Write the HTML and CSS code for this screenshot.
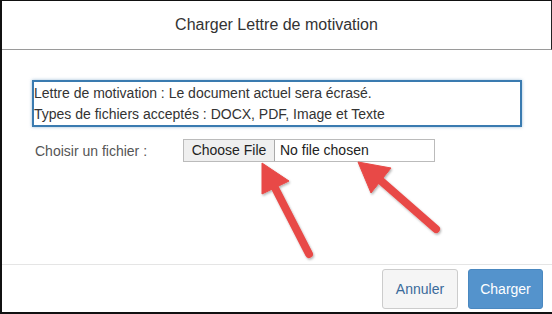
FILE: index.html
```html
<!DOCTYPE html>
<html lang="fr">
<head>
    <meta charset="UTF-8">
    <title>Charger Lettre de motivation</title>
    <link rel="stylesheet" href="styles.css">
</head>
<body>
<div class="modal">
    <div class="modal-header">Charger Lettre de motivation</div>
    <div class="modal-body">
        <div class="info">
            Lettre de motivation : Le document actuel sera écrasé.<br>
            Types de fichiers acceptés : DOCX, PDF, Image et Texte
        </div>
        <div class="file-row">
            <span class="file-label">Choisir un fichier :</span>
            <div class="file-input">
                <span class="file-btn">Choose File</span>
                <span class="file-name">No file chosen</span>
            </div>
        </div>
    </div>
    <div class="modal-footer">
        <button class="btn btn-default">Annuler</button>
        <button class="btn btn-primary">Charger</button>
    </div>
    <svg class="arrows" width="552" height="314" viewBox="0 0 552 314">
        <defs>
            <filter id="shadow" x="-20%" y="-20%" width="140%" height="140%">
                <feDropShadow dx="1" dy="1.5" stdDeviation="1.2" flood-color="#000" flood-opacity="0.3"/>
            </filter>
        </defs>
        <g fill="#e84a47" stroke="#e84a47" filter="url(#shadow)">
            <line x1="309" y1="254" x2="273" y2="184" stroke-width="8" stroke-linecap="round"/>
            <polygon points="262,163 262,194 289,181" stroke-width="1" stroke-linejoin="round"/>
            <line x1="436" y1="229" x2="380" y2="180" stroke-width="8" stroke-linecap="round"/>
            <polygon points="358,162 371,193 391,168" stroke-width="1" stroke-linejoin="round"/>
        </g>
    </svg>
</div>
</body>
</html>
```

FILE: styles.css
```css
body {
    margin: 0;
    font-family: "Liberation Sans", Arial, sans-serif;
    background-color: #fff;
}

.modal {
    position: relative;
    width: 552px;
    height: 314px;
    box-sizing: border-box;
    border-left: 2px solid #111;
    border-top: 1px solid #111;
    border-bottom: 2px solid #111;
    display: flex;
    flex-direction: column;
}

.modal-header {
    height: 48px;
    line-height: 48px;
    border-bottom: 1px solid #9a9a9a;
    border-right: 1px solid #222;
    text-align: center;
    font-size: 16px;
    color: #333;
}

.modal-body {
    height: 214px;
    padding: 30px 0 0 30px;
    box-sizing: border-box;
}

.info {
    width: 490px;
    height: 47px;
    box-sizing: border-box;
    border: 2px solid #3a7bb0;
    box-shadow: 0 0 3px rgba(58, 123, 176, 0.5);
    padding: 1px 0 0 0;
    font-size: 14px;
    line-height: 21px;
    color: #333;
}

.file-row {
    display: flex;
    align-items: center;
    margin-top: 12px;
    height: 23px;
}

.file-label {
    width: 148px;
    padding-left: 3px;
    font-size: 14px;
    color: #555;
}

.file-input {
    display: flex;
    width: 252px;
    height: 23px;
    box-sizing: border-box;
    border: 1px solid #bbb;
    font-size: 14px;
}

.file-btn {
    width: 90px;
    background-color: #efefef;
    border-right: 1px solid #aaa;
    text-align: center;
    line-height: 21px;
    color: #222;
}

.file-name {
    padding-left: 5px;
    line-height: 21px;
    color: #222;
}

.modal-footer {
    border-top: 1px solid #e5e5e5;
    padding: 4px 9px 3px 0;
    display: flex;
    justify-content: flex-end;
    gap: 10px;
}

.btn {
    height: 40px;
    font-family: "Liberation Sans", Arial, sans-serif;
    font-size: 14px;
    border-radius: 3px;
    padding: 0;
    border: 1px solid #ccc;
}

.btn-default {
    width: 76px;
    background-color: #f5f5f5;
    color: #3a6a9a;
}

.btn-primary {
    width: 75px;
    background-color: #5493cc;
    border-color: #4a88c0;
    color: #fff;
}

.arrows {
    position: absolute;
    left: -2px;
    top: -1px;
    pointer-events: none;
}
```
